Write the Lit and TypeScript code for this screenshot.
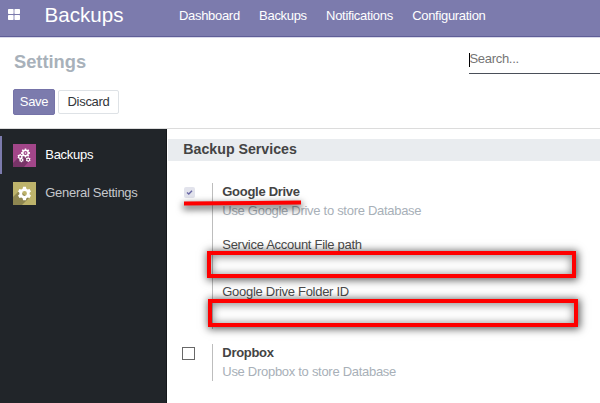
import { LitElement, html, css, svg } from "lit";
import { customElement } from "lit/decorators.js";

const gear = (cx: number, cy: number, r: number, teeth: number, hole: number) => {
  const pts: string[] = [];
  for (let i = 0; i < teeth; i++) {
    const a = (i * 2 * Math.PI) / teeth - Math.PI / 2;
    for (const [d, k] of [[-0.36, 0.76], [-0.2, 1], [0.2, 1], [0.36, 0.76]]) {
      const t = a + (d * 2 * Math.PI) / teeth;
      pts.push(`${(cx + r * k * Math.cos(t)).toFixed(2)} ${(cy + r * k * Math.sin(t)).toFixed(2)}`);
    }
  }
  return svg`<path fill="#fff" fill-rule="evenodd" d="M${pts.join("L")}ZM${cx - hole} ${cy}a${hole} ${hole} 0 1 0 ${hole * 2} 0a${hole} ${hole} 0 1 0 ${-hole * 2} 0Z"/>`;
};

@customElement("app-root")
export class AppRoot extends LitElement {
  static styles = css`
    :host {
      display: flex;
      flex-direction: column;
      width: 600px;
      height: 403px;
      overflow: hidden;
      background: #fff;
      color: #4c4c4c;
      font: 13px/18px "Liberation Sans", Arial, sans-serif;
      letter-spacing: -0.29px;
      white-space: nowrap;
    }
    * { box-sizing: border-box; }
    .nav {
      flex: none;
      display: flex;
      height: 37px;
      padding-left: 8px;
      background: #7c7bad;
      border-bottom: 1px solid #5f5e97;
      color: #fff;
      line-height: 31px;
    }
    .apps { width: 12px; height: 11px; margin-top: 9px; }
    .brand { width: 134.5px; margin-left: 24.5px; font-size: 20.6px; line-height: 30px; letter-spacing: 0; }
    .menu { display: flex; gap: 19.3px; letter-spacing: -0.31px; }
    .panel {
      flex: none;
      display: grid;
      grid-template-columns: 469px 1fr;
      height: 92px;
      border-top: 1px solid #d9d9ea;
      border-bottom: 1px solid #dcdcdc;
    }
    .title { margin: 13px 0 0 14px; font-size: 18.3px; line-height: 22px; font-weight: bold; color: #a8b1ba; letter-spacing: 0; }
    .buttons { display: flex; gap: 3px; margin: 17px 0 0 13px; }
    .btn {
      height: 24px;
      border: 1px solid #dee2e6;
      border-radius: 2px;
      background: #fff;
      color: #33363a;
      font: inherit;
      letter-spacing: inherit;
      line-height: 22px;
      padding: 0;
      width: 61px;
    }
    .primary { width: 42px; height: 26px; line-height: 24px; margin-top: -1px; background: #7c7bad; border-color: #7573a8; color: #fff; }
    .search {
      height: 36px;
      border-bottom: 1px solid #4a4f59;
      padding-top: 15px;
      color: #757575;
    }
    .query { display: block; height: 14px; line-height: 12px; border-left: 1px solid #000; text-indent: -0.6px; }
    .main { flex: 1; display: flex; min-height: 0; }
    .side { width: 167px; flex: none; background: #212529; padding-top: 7px; border-right: 1px solid #15181b; }
    .tab {
      display: flex;
      align-items: center;
      gap: 9.3px;
      height: 38px;
      padding-left: 11px;
      border-left: 2px solid transparent;
      color: #c5c8cc;
    }
    .tab.active { border-color: #7c7bad; color: #fff; }
    .tab svg { width: 23px; height: 23px; }
    .content { flex: 1; padding: 10px 0 0 1px; }
    .heading {
      margin: 0;
      height: 22px;
      padding-left: 15.3px;
      background: #e9ecef;
      font-size: 14.2px;
      line-height: 21px;
      font-weight: bold;
      color: #444;
      letter-spacing: 0;
    }
    .setting { position: relative; display: flex; padding-left: 14px; }
    .drive { margin-top: 22px; height: 146px; }
    .dropbox { margin-top: 15px; height: 37px; }
    .check { width: 13px; height: 13px; margin: 3px 17px 0 0; border: 1px solid #686868; }
    .check.on {
      width: 11px;
      height: 11px;
      margin: 4px 17px 0 2px;
      border: 0;
      border-radius: 2px;
      background: #e2e3ec;
    }
    .check svg { display: block; width: 11px; height: 11px; }
    .info { padding-left: 9.3px; border-left: 1px solid #bdbdbd; }
    .name { font-weight: bold; color: #444; }
    .desc { color: #a8b0b8; line-height: 19px; }
    .first { margin-top: 16px; }
    .second { margin-top: 29px; }
    .mark {
      position: absolute;
      border: 4px solid #fe0000;
      box-shadow: 1px 1px 8px 1px rgba(0, 0, 0, 0.65), inset 0 1px 8px 1px rgba(0, 0, 0, 0.45);
    }
    .m1 { left: 38.7px; top: 68px; width: 369.3px; height: 27px; }
    .m2 { left: 39.7px; top: 116px; width: 370.3px; height: 28px; }
    .underline {
      position: absolute;
      left: 16px;
      top: 18px;
      width: 117px;
      height: 4px;
      background: #fe0000;
      box-shadow: 0 3px 7px 1px rgba(0, 0, 0, 0.6);
      transform: rotate(-0.4deg);
    }
  `;

  render() {
    return html`
      <header class="nav">
        <svg class="apps" viewBox="0 0 12 11" fill="#fff">
          <rect width="5.6" height="5" rx=".7" /><rect x="6.4" width="5.6" height="5" rx=".7" />
          <rect y="6" width="5.6" height="5" rx=".7" /><rect x="6.4" y="6" width="5.6" height="5" rx=".7" />
        </svg>
        <div class="brand">Backups</div>
        <nav class="menu"><span>Dashboard</span><span>Backups</span><span>Notifications</span><span>Configuration</span></nav>
      </header>
      <section class="panel">
        <div>
          <div class="title">Settings</div>
          <div class="buttons"><button class="btn primary">Save</button><button class="btn">Discard</button></div>
        </div>
        <div class="search"><span class="query">Search...</span></div>
      </section>
      <main class="main">
        <aside class="side">
          <div class="tab active">
            <svg viewBox="0 0 23 23">
              <rect width="23" height="23" fill="#a24689" />
              <path d="M5 14L12 10L17 16L11 23H0V19Z" fill="#783468" />
              ${gear(12.5, 9, 4.6, 8, 2)}${gear(7.2, 12.7, 2.8, 6, 1)}${gear(8.4, 16, 2.3, 6, 0.8)}${gear(15.2, 15.6, 2.5, 6, 0.9)}
              <circle cx="12.5" cy="9" r=".8" fill="#fff" />
            </svg>
            <span>Backups</span>
          </div>
          <div class="tab">
            <svg viewBox="0 0 23 23">
              <rect width="23" height="23" fill="#bdb36b" />
              <path d="M6 9L16 16L9 23H0V15Z" fill="#8e8650" />
              ${gear(11.5, 11.5, 6.8, 6, 2.4)}
            </svg>
            <span>General Settings</span>
          </div>
        </aside>
        <section class="content">
          <h2 class="heading">Backup Services</h2>
          <div class="setting drive">
            <div class="check on">
              <svg viewBox="0 0 11 11"><path d="M3 5.4L4.8 7L8 3.7" fill="none" stroke="#6968a5" stroke-width="1.4" /></svg>
            </div>
            <div class="info">
              <div class="name">Google Drive</div>
              <div class="desc">Use Google Drive to store Database</div>
              <div class="first">Service Account File path</div>
              <div class="second">Google Drive Folder ID</div>
            </div>
            <i class="underline"></i><i class="mark m1"></i><i class="mark m2"></i>
          </div>
          <div class="setting dropbox">
            <div class="check"></div>
            <div class="info">
              <div class="name">Dropbox</div>
              <div class="desc">Use Dropbox to store Database</div>
            </div>
          </div>
        </section>
      </main>
    `;
  }
}
